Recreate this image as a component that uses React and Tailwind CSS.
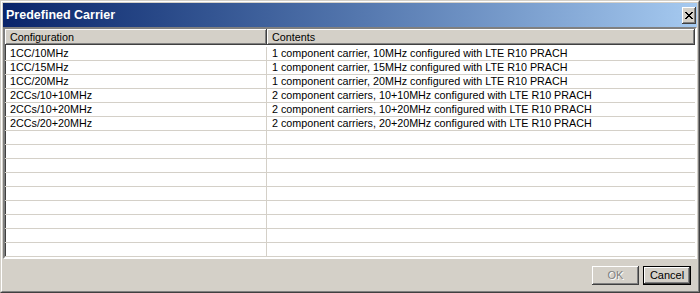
import React from "react";

const rows = [
  ["1CC/10MHz", "1 component carrier, 10MHz configured with LTE R10 PRACH"],
  ["1CC/15MHz", "1 component carrier, 15MHz configured with LTE R10 PRACH"],
  ["1CC/20MHz", "1 component carrier, 20MHz configured with LTE R10 PRACH"],
  ["2CCs/10+10MHz", "2 component carriers, 10+10MHz configured with LTE R10 PRACH"],
  ["2CCs/10+20MHz", "2 component carriers, 10+20MHz configured with LTE R10 PRACH"],
  ["2CCs/20+20MHz", "2 component carriers, 20+20MHz configured with LTE R10 PRACH"],
];

const allRows = [...rows, ...Array.from({ length: 9 }, () => ["", ""])];

export default function App() {
  return (
    <div className="w-[700px] h-[293px] bg-[#d4d0c8] border border-t-[#d4d0c8] border-l-[#d4d0c8] border-b-[#404040] border-r-[#404040] font-['Liberation_Sans',Arial,sans-serif] text-black">
      <div className="h-full border border-t-white border-l-white border-b-[#808080] border-r-[#808080] p-px flex flex-col">
        {/* Title bar */}
        <div className="h-[24px] shrink-0 flex items-center justify-between bg-gradient-to-r from-[#0a246a] to-[#a6caf0] pl-[3px] pr-[1px]">
          <span className="text-white font-bold text-[12.5px] leading-[16px]">Predefined Carrier</span>
          <div className="w-[14px] h-[17px] bg-[#d4d0c8] shadow-[inset_-1px_-1px_0_#404040,inset_1px_1px_0_#fff,inset_-2px_-2px_0_#808080] flex items-center justify-center">
            <svg width="8" height="7" viewBox="0 0 8 7" shapeRendering="crispEdges">
              <path
                fill="#000"
                d="M0 0h2v1h-2zM6 0h2v1h-2zM1 1h2v1h-2zM5 1h2v1h-2zM2 2h4v1h-4zM3 3h2v1h-2zM2 4h4v1h-4zM1 5h2v1h-2zM5 5h2v1h-2zM0 6h2v1h-2zM6 6h2v1h-2z"
              />
            </svg>
          </div>
        </div>

        {/* List view */}
        <div className="h-[232px] shrink-0 border-2 border-t-[#808080] border-l-[#808080] border-b-white border-r-white">
          <div className="h-full bg-white flex flex-col overflow-hidden text-[10.75px] leading-[13px] shadow-[inset_1px_1px_0_#404040]">
            <div className="h-[16px] shrink-0 flex bg-[#d4d0c8]">
              <div className="w-[262px] shrink-0 h-full pl-[5px] flex items-center shadow-[inset_-1px_-1px_0_#404040,inset_1px_1px_0_#fff,inset_-2px_-2px_0_#808080]">
                Configuration
              </div>
              <div className="flex-1 h-full pl-[5px] flex items-center shadow-[inset_-1px_-1px_0_#404040,inset_1px_1px_0_#fff,inset_-2px_-2px_0_#808080]">
                Contents
              </div>
            </div>
            <div className="pt-[2px] flex flex-col">
              {allRows.map((r, i) => (
                <div key={i} className="h-[14px] shrink-0 flex border-b border-[#d4d0c8]">
                  <div className="w-[262px] shrink-0 border-r border-[#d4d0c8] pl-[5px] whitespace-nowrap">
                    {r[0]}
                  </div>
                  <div className="flex-1 pl-[5px] whitespace-nowrap">{r[1]}</div>
                </div>
              ))}
            </div>
          </div>
        </div>

        {/* Bottom buttons */}
        <div className="flex-1 flex justify-end items-start pt-[7px] pr-[6px] gap-[4px] text-[11px]">
          <div className="w-[47px] h-[19px] flex items-center justify-center text-[#808080] [text-shadow:1px_1px_0_#fff] shadow-[inset_-1px_-1px_0_#404040,inset_1px_1px_0_#fff,inset_-2px_-2px_0_#808080]">
            OK
          </div>
          <div className="w-[48px] h-[19px] border border-black flex items-center justify-center shadow-[inset_-1px_-1px_0_#404040,inset_1px_1px_0_#fff,inset_-2px_-2px_0_#808080]">
            Cancel
          </div>
        </div>
      </div>
    </div>
  );
}
